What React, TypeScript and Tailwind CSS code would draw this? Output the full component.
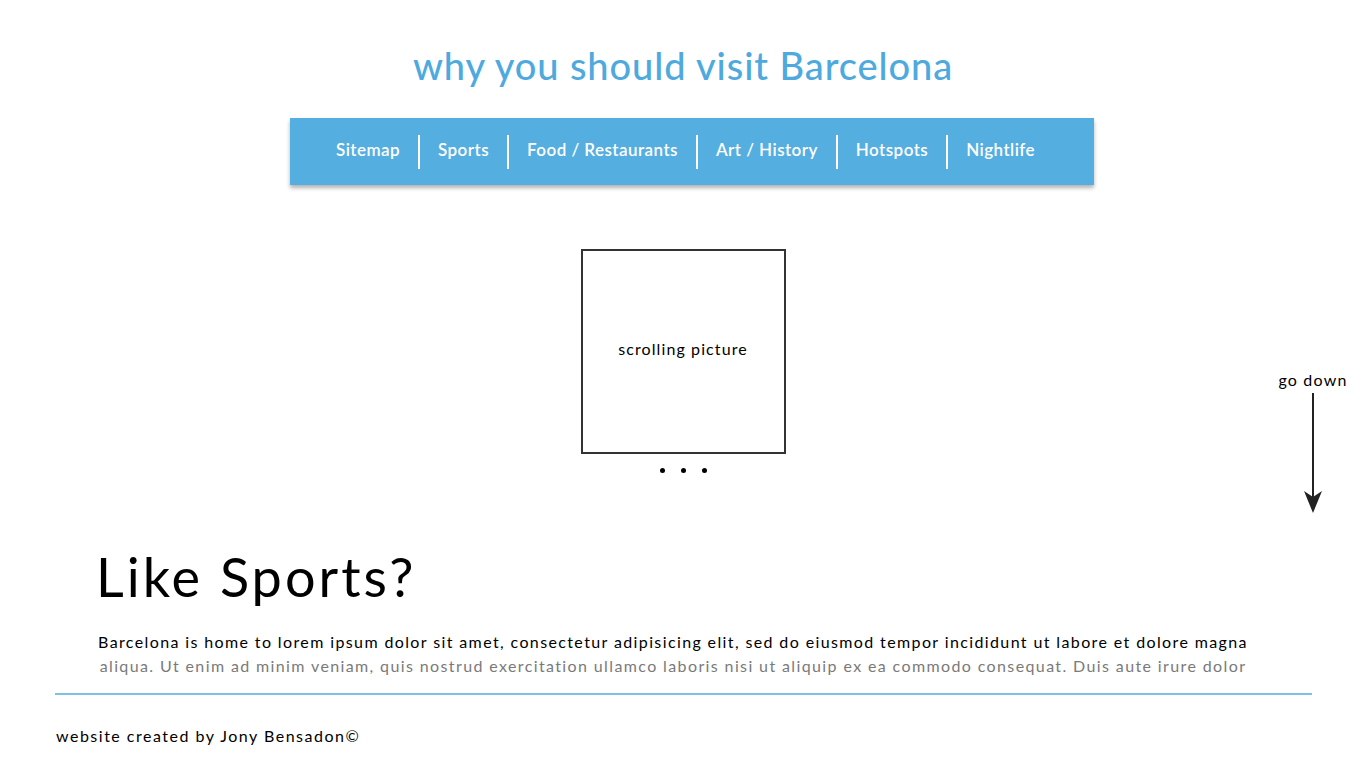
import React from "react";

const NAV = ["Sitemap", "Sports", "Food / Restaurants", "Art / History", "Hotspots", "Nightlife"];

const font = { fontFamily: "Lato, 'Open Sans', sans-serif" };

export default function App() {
  return (
    <div className="relative min-h-[768px] w-[1366px] bg-white text-black" style={font}>
      <h1 className="pt-[41px] text-center text-[38px] font-medium leading-[48px] tracking-[0.9px] text-[#4eaade]">
        why you should visit Barcelona
      </h1>

      <nav className="ml-[290px] mt-[29px] flex h-[67px] w-[804px] items-center bg-[#55aee0] pl-[46px] shadow-[0_3px_4px_rgba(0,0,0,0.3)]">
        {NAV.map((item, i) => (
          <div
            key={item}
            className={`flex h-[34px] items-center pb-[3px] text-[17px] font-semibold tracking-[0.45px] text-white ${
              i === 0 ? "pr-[18px]" : "border-l-2 border-white px-[18px]"
            }`}
          >
            {item}
          </div>
        ))}
      </nav>

      <div className="relative mt-[64px] flex flex-col items-center">
        <div className="flex h-[205px] w-[205px] items-center justify-center border-2 border-[#333] pb-[5px]">
          <span className="text-[16px] tracking-[1.1px]">scrolling picture</span>
        </div>
        <div className="mt-[14px] flex gap-[16px]">
          <span className="h-[5px] w-[5px] rounded-full bg-black" />
          <span className="h-[5px] w-[5px] rounded-full bg-black" />
          <span className="h-[5px] w-[5px] rounded-full bg-black" />
        </div>

        <div className="absolute left-[1276px] top-[120px] flex w-[74px] flex-col items-center">
          <span className="text-[16px] leading-[22px] tracking-[1.2px]">go down</span>
          <svg width="20" height="122" viewBox="0 0 20 122" className="mt-[2px]">
            <line x1="10" y1="0" x2="10" y2="108" stroke="#222" strokeWidth="2" />
            <path d="M1 98 L10 120 L19 98 L10 104 Z" fill="#222" />
          </svg>
        </div>
      </div>

      <h2 className="ml-[96px] mt-[72px] text-[54px] font-normal leading-[64px] tracking-[3px]">Like Sports?</h2>

      <div className="mt-[21px] flex flex-col items-center pr-[20px] text-[16px] leading-[24px] tracking-[1.38px]">
        <p className="whitespace-nowrap text-black">
          Barcelona is home to lorem ipsum dolor sit amet, consectetur adipisicing elit, sed do eiusmod tempor incididunt ut labore et dolore magna
        </p>
        <p className="whitespace-nowrap text-[#7a7a7a]">
          aliqua. Ut enim ad minim veniam, quis nostrud exercitation ullamco laboris nisi ut aliquip ex ea commodo consequat. Duis aute irure dolor
        </p>
      </div>

      <hr className="ml-[55px] mt-[15px] w-[1257px] border-0 border-t-2 border-[#7ec1e5]" />

      <footer className="ml-[56px] mt-[29px] text-[16px] tracking-[1.5px]">website created by Jony Bensadon©</footer>
    </div>
  );
}
